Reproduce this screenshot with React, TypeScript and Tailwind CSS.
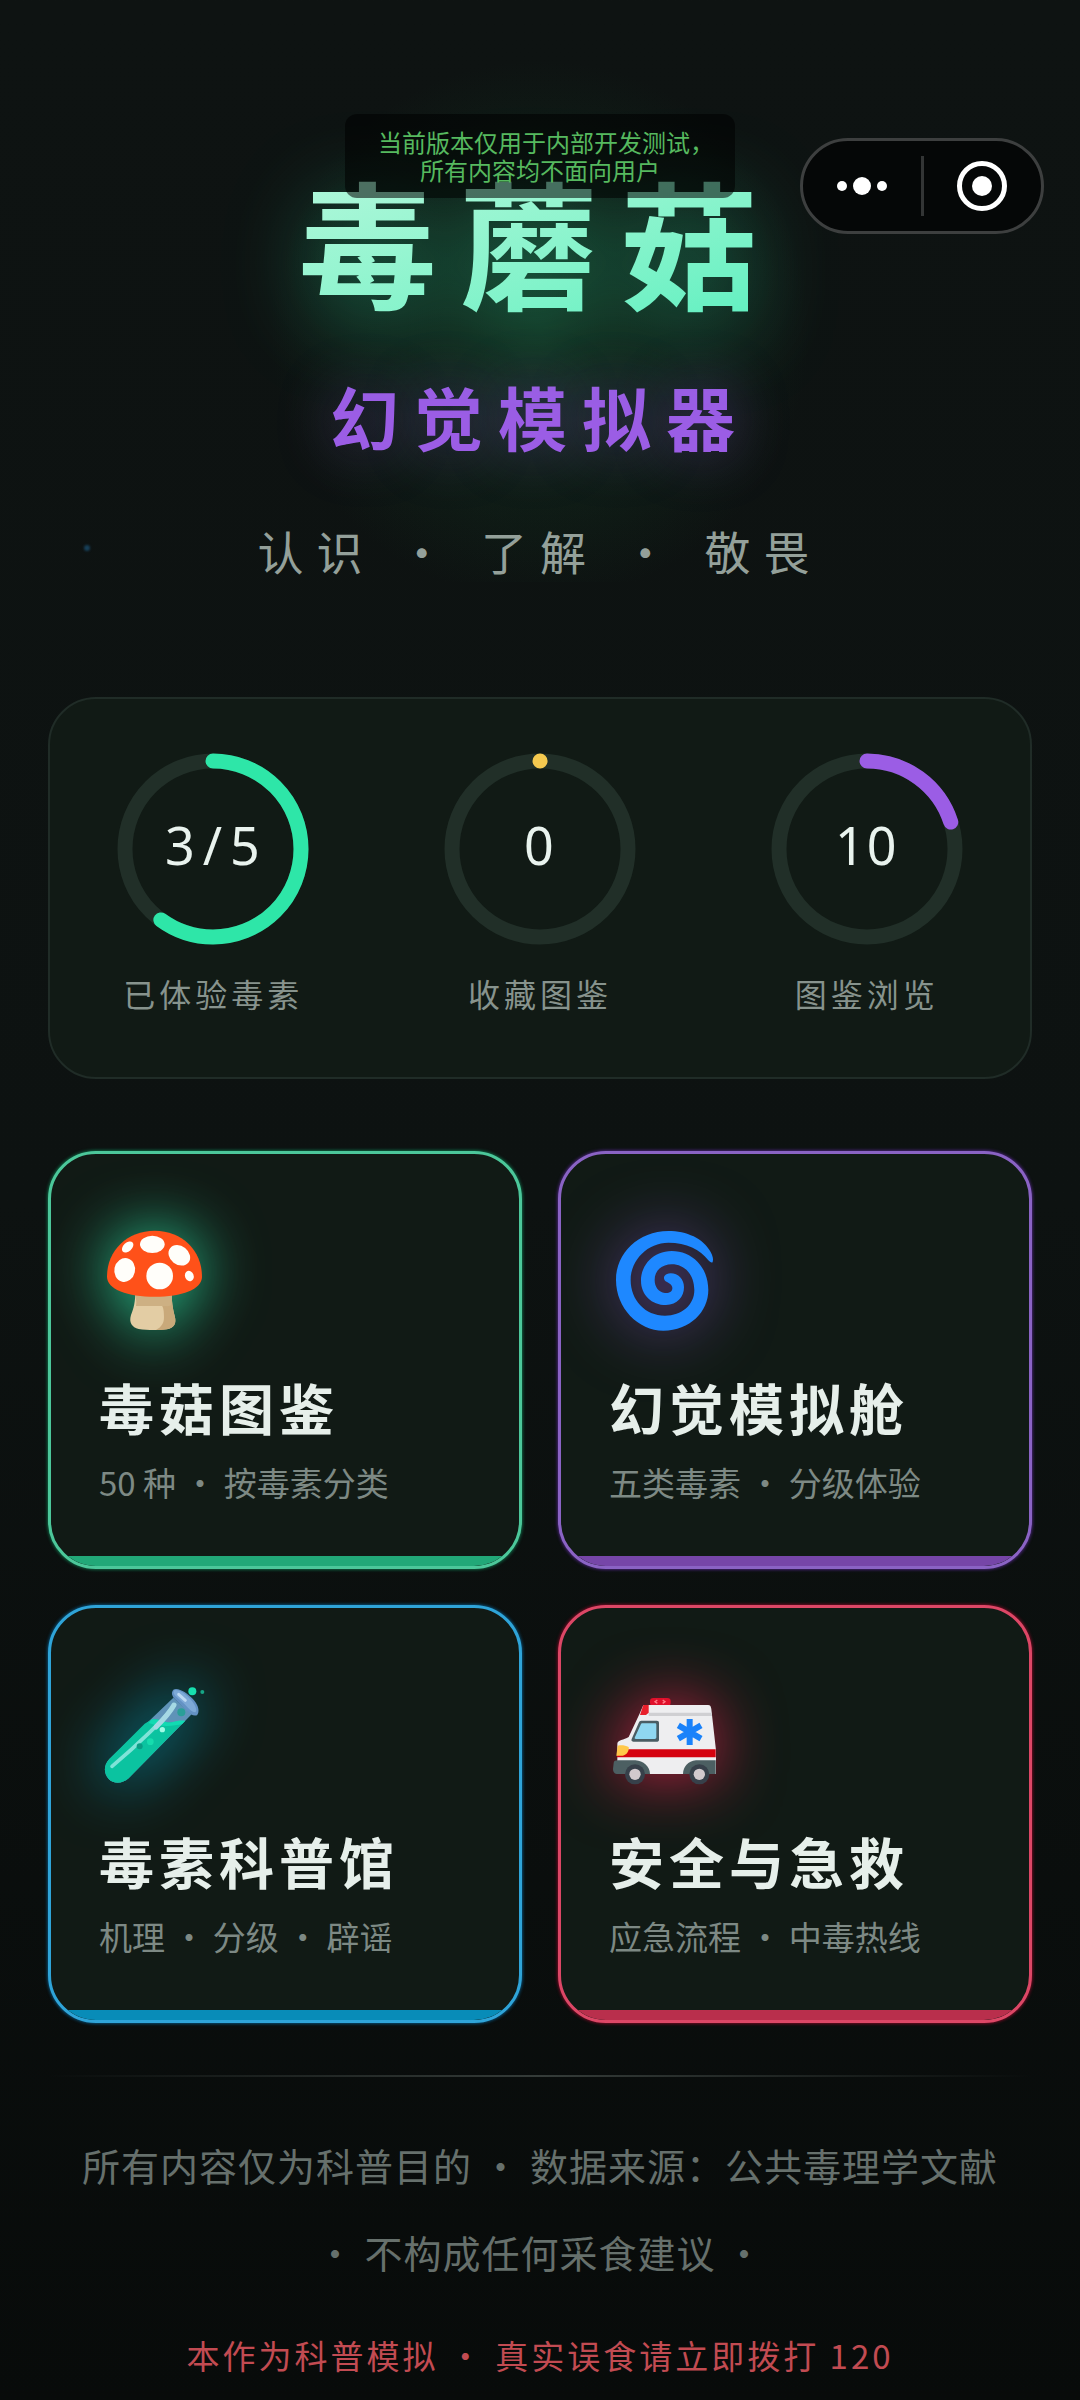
import React from 'react';

interface Stat {
    label: string;
    value: string;
    total?: string;
    percent: number;
    color: string;
}

interface Entry {
    title: string;
    desc: string;
    href: string;
    icon: React.ReactNode;
    cardClass: string;
    barClass: string;
    iconClass: string;
}

const MushroomIcon = () => (
    <svg viewBox="207 288 324 324" className="h-full w-full overflow-visible" aria-hidden="true">
        <path d="M316 485 C316 515 311 535 303 555 C296 578 306 592 326 597 C350 601 388 601 410 598 C432 594 440 580 434 558 C428 535 425 515 425 485Z" fill="#e3cda4" />
        <path d="M388 520 C401 526 402 545 402 562 C402 580 394 592 378 600 C400 600 416 598 424 593 C438 586 438 572 434 558 C428 535 425 515 425 490Z" fill="#c9a97a" />
        <path d="M316 485 H425 V520 C425 532 410 528 390 528 H318 C321 515 316 500 316 485Z" fill="#cdb083" />
        <path d="M374 302 C455 302 516 360 516 440 C516 478 455 500 374 500 C293 500 231 478 231 440 C231 360 293 302 374 302Z" fill="#ff5119" />
        <ellipse cx="367" cy="343" rx="37" ry="26" fill="#fffefa" />
        <ellipse cx="448" cy="376" rx="35" ry="28" transform="rotate(38 448 376)" fill="#fffefa" />
        <ellipse cx="293" cy="351" rx="20" ry="13" transform="rotate(-42 293 351)" fill="#fffefa" />
        <ellipse cx="284" cy="420" rx="31" ry="36" transform="rotate(12 284 420)" fill="#fffefa" />
        <circle cx="389" cy="438" r="40" fill="#fffefa" />
        <ellipse cx="478" cy="438" rx="13" ry="16" transform="rotate(-20 478 438)" fill="#fffefa" />
    </svg>
);

const SpiralIcon = () => (
    <svg viewBox="207 288 324 324" className="h-full w-full overflow-visible" aria-hidden="true">
        <path
            d="M518 396 C521 388 518 378 512 366 C490 325 440 303 385 303 C295 303 228 370 228 450 C228 535 295 602 370 602 C450 602 505 545 505 480 C505 410 455 363 395 363 C340 363 303 405 303 452 C303 495 335 525 378 525 C412 525 432 500 432 472 C432 448 415 430 392 430 C375 430 367 442 375 452 C382 457 396 462 397 473 C398 484 388 490 375 489 C355 487 344 470 344 450 C344 422 366 403 395 403 C435 403 463 435 463 480 C463 525 425 557 375 557 C315 557 272 510 272 450 C272 388 325 338 385 338 C440 338 480 358 505 391 C509 396 516 400 518 396Z"
            fill="#1e88ff"
        />
    </svg>
);

const TestTubeIcon = () => (
    <svg viewBox="9 9 324 324" className="h-full w-full overflow-visible" aria-hidden="true">
        <path d="M232 62 L287 112 L98 304 C78 322 52 321 38 306 C22 289 23 264 40 246Z" fill="#5f93b8" />
        <path d="M166 128 C190 122 205 140 228 136 C244 132 254 132 266 133 L98 304 C78 322 52 321 38 306 C22 289 23 264 40 246 L146 140Z" fill="#0bc3a0" />
        <path d="M166 128 C190 122 205 140 228 136 C244 130 256 130 268 131 L258 142 C235 146 200 152 158 138Z" fill="#12dab2" />
        <path d="M232 38 C246 30 275 48 294 70 C309 88 311 106 303 115 C290 118 285 112 276 104 L236 66 C226 54 226 46 232 38Z" fill="#6492c4" />
        <path d="M236 39 C252 38 272 52 288 72 C300 88 304 100 298 106 C286 106 278 94 266 82 L242 60 C232 52 230 44 236 39Z" fill="#7da9d6" />
        <path d="M248 52 L268 70" stroke="#bcd9f2" strokeWidth="9" strokeLinecap="round" />
        <path d="M234 84 C215 118 120 208 48 268" fill="none" stroke="#7fe3d8" strokeWidth="11" strokeLinecap="round" />
        <path d="M234 84 C224 102 204 126 180 150" fill="none" stroke="#a5d9e4" strokeWidth="15" strokeLinecap="round" />
        <circle cx="256" cy="106" r="12" fill="#2a9f98" />
        <circle cx="199" cy="158" r="8" fill="#a0fbe6" />
        <circle cx="163" cy="194" r="10" fill="#16dcae" />
        <circle cx="131" cy="208" r="9" fill="#0a9c84" />
        <circle cx="289" cy="43" r="12" fill="#17dfae" />
        <circle cx="319" cy="45" r="6" fill="#16a586" />
    </svg>
);

const AmbulanceIcon = () => (
    <svg viewBox="15 9 324 324" className="h-full w-full overflow-visible" aria-hidden="true">
        <rect x="138" y="63" width="62" height="24" rx="10" fill="#e0102b" />
        <path d="M160 69 L153 74 L160 79 M176 69 L183 74 L176 79" fill="none" stroke="#ff7a86" strokeWidth="4" />
        <path d="M118 84 H312 C319 84 321 89 322 96 L336 220 V291 H40 V200 C40 190 60 188 74 180 L106 112Z" fill="#eeeef0" />
        <path d="M134 107 H323 L324 117 H134Z" fill="#cfcfd2" />
        <path d="M118 84 H134 V107 L126 114 H108Z" fill="#e81f2b" />
        <path d="M112 131 H158 C163 131 165 133 165 138 V188 C165 192 162 194 158 194 H88 C82 194 81 190 84 184 L104 138 C106 133 108 131 112 131Z" fill="#4a5d63" />
        <path d="M116 139 H153 C156 139 157 141 157 143 V181 C157 184 155 186 152 186 H96 C92 186 91 184 93 180 L110 143 C111 140 113 139 116 139Z" fill="#8fd7f0" />
        <path d="M66 217 H335 V241 H38 L40 234Z" fill="#d5020f" />
        <path d="M41 206 C52 204 64 205 74 210 C76 222 68 234 56 236 H37Z" fill="#ffc84a" />
        <path d="M29 258 C29 252 34 250 42 250 H94 C118 252 138 268 138 291 H38 C30 290 27 284 27 276Z" fill="#4c5f62" />
        <path d="M335 250 V291 H237 C237 270 252 252 276 250Z" fill="#4c5f62" />
        <circle cx="93" cy="292" r="30" fill="#37404a" />
        <circle cx="286" cy="292" r="30" fill="#37404a" />
        <circle cx="93" cy="292" r="17" fill="#d2c9cd" />
        <circle cx="286" cy="292" r="17" fill="#d2c9cd" />
        <path d="M257 126 V204 M223 145 L291 185 M291 145 L223 185" stroke="#1a82fa" strokeWidth="18" />
    </svg>
);

const stats: Stat[] = [
    { label: '已体验毒素', value: '3', total: '5', percent: 60, color: '#2ee6a8' },
    { label: '收藏图鉴', value: '0', percent: 0, color: '#f5c94f' },
    { label: '图鉴浏览', value: '10', percent: 20, color: '#9b5de5' },
];

const entries: Entry[] = [
    {
        title: '毒菇图鉴',
        desc: '50 种 · 按毒素分类',
        href: '#atlas',
        icon: <MushroomIcon />,
        cardClass: 'border-[#4cc79a] shadow-[0_0_3px_1px_rgba(16,120,80,0.8)]',
        barClass: 'bg-[#22a878]',
        iconClass: 'drop-shadow-[0_0_32px_rgba(46,230,168,0.9)]',
    },
    {
        title: '幻觉模拟舱',
        desc: '五类毒素 · 分级体验',
        href: '#simulator',
        icon: <SpiralIcon />,
        cardClass: 'border-[#8a63c4] shadow-[0_0_3px_1px_rgba(84,40,140,0.8)]',
        barClass: 'bg-[#7646a8]',
        iconClass: 'drop-shadow-[0_0_32px_rgba(155,93,229,0.6)]',
    },
    {
        title: '毒素科普馆',
        desc: '机理 · 分级 · 辟谣',
        href: '#science',
        icon: <TestTubeIcon />,
        cardClass: 'border-[#2fa4d8] shadow-[0_0_3px_1px_rgba(8,92,140,0.8)]',
        barClass: 'bg-[#088cb8]',
        iconClass: 'drop-shadow-[0_0_32px_rgba(0,180,216,0.9)]',
    },
    {
        title: '安全与急救',
        desc: '应急流程 · 中毒热线',
        href: '#first-aid',
        icon: <AmbulanceIcon />,
        cardClass: 'border-[#dc4766] shadow-[0_0_3px_1px_rgba(140,10,40,0.8)]',
        barClass: 'bg-[#b92f4c]',
        iconClass: 'drop-shadow-[0_0_32px_rgba(239,35,80,0.8)]',
    },
];

const RADIUS = 88;
const CIRCUMFERENCE = 2 * Math.PI * RADIUS;

const StatRing = ({ stat }: { stat: Stat }) => (
    <div className="flex flex-col items-center">
        <div className="grid h-48 w-48 place-items-center">
            <svg viewBox="0 0 192 192" className="col-start-1 row-start-1 h-48 w-48 -rotate-90" aria-hidden="true">
                <circle cx="96" cy="96" r={RADIUS} fill="none" stroke="#212f28" strokeWidth="15" />
                <circle
                    cx="96"
                    cy="96"
                    r={RADIUS}
                    fill="none"
                    stroke={stat.color}
                    strokeWidth="15"
                    strokeLinecap="round"
                    strokeDasharray={`${Math.max(0.1, (CIRCUMFERENCE * stat.percent) / 100)} ${CIRCUMFERENCE}`}
                />
            </svg>
            <div className="col-start-1 row-start-1 pb-2 font-['Noto_Sans',sans-serif] text-[52px] leading-none tracking-[2px] text-[#e9f3ee]">
                {stat.value}
                {stat.total && <><span className="mx-[6px]">/</span>{stat.total}</>}
            </div>
        </div>
        <p className="mt-6 text-[32px] leading-12 tracking-[4px] text-[#87938d]">{stat.label}</p>
    </div>
);

const EntryCard = ({ entry }: { entry: Entry }) => (
    <a href={entry.href} className={`flex flex-col overflow-hidden rounded-[48px] border-3 bg-[#111a15] ${entry.cardClass}`}>
        <div className="flex-1 px-12 pt-18 pb-[50px]">
            <div className={`h-27 w-27 ${entry.iconClass}`}>{entry.icon}</div>
            <h2 className="mt-8 text-[55px] leading-20 font-bold tracking-[5px] whitespace-nowrap text-[#e6efea]">{entry.title}</h2>
            <p className="mt-3 text-[33px] leading-12 whitespace-nowrap text-[#7d8984]">{entry.desc}</p>
        </div>
        <div className={`h-[10px] ${entry.barClass}`} />
    </a>
);

const App = () => {
    return (
        <div className="relative min-h-screen overflow-hidden bg-linear-to-b from-[#0e1312] via-[#0d1211] to-[#080b0a] font-['Noto_Sans_CJK_SC','Noto_Sans',sans-serif]" lang="zh-CN">
            {/* Mini program capsule */}
            <div className="absolute top-[138px] right-9 z-20 flex h-24 w-61 items-center rounded-full border-3 border-[#3d3f3f] bg-[#050707]">
                <button type="button" aria-label="更多" className="flex flex-1 items-center justify-center gap-[6px]">
                    <span className="h-[10px] w-[10px] rounded-full bg-white" />
                    <span className="h-[18px] w-[18px] rounded-full bg-white" />
                    <span className="h-[10px] w-[10px] rounded-full bg-white" />
                </button>
                <span className="h-15 w-[3px] bg-[#333535]" />
                <button type="button" aria-label="关闭" className="flex flex-1 items-center justify-center">
                    <span className="flex h-[50px] w-[50px] items-center justify-center rounded-full border-5 border-white">
                        <span className="h-5 w-5 rounded-full bg-white" />
                    </span>
                </button>
            </div>

            {/* Internal build notice */}
            <div className="absolute top-[114px] left-1/2 z-10 w-[390px] -translate-x-1/2 rounded-xl bg-black/55 px-4 py-[14px] text-center text-[24px] leading-7 text-[#56b95f]">
                <p className="whitespace-nowrap [font-feature-settings:'halt']">当前版本仅用于内部开发测试，</p>
                <p>所有内容均不面向用户</p>
            </div>

            {/* Floating spore */}
            <span className="absolute top-[545px] left-[84px] h-[6px] w-[6px] rounded-full bg-[#17405a] blur-[1px]" />

            <header className="flex flex-col items-center bg-[radial-gradient(circle_at_50%_330px,rgba(24,84,48,0.4),rgba(24,84,48,0)_270px)] pt-39 text-center">
                <h1 className="drop-shadow-[0_16px_44px_rgba(46,230,168,0.4)]">
                    <span className="block bg-linear-to-br from-[#b4f8dc] to-[#5cf0c0] bg-clip-text text-[138px] leading-[166px] font-bold tracking-[23px] whitespace-nowrap text-transparent">毒蘑菇</span>
                </h1>
                <p className="mt-13 text-[69px] leading-21 font-bold tracking-[15px] whitespace-nowrap text-[#9b5de5] [text-shadow:0_0_58px_rgba(155,93,229,0.4)]">幻觉模拟器</p>
                <p className="mt-15 text-[46px] leading-16 tracking-[13px] whitespace-nowrap text-[#94a09a]">认识 · 了解 · 敬畏</p>
            </header>

            <main className="px-12 pt-[115px]">
                <section className="grid grid-cols-3 rounded-[48px] border-2 border-[#202c27] bg-[#111a15] pt-[54px] pb-15">
                    {stats.map(stat => (
                        <StatRing key={stat.label} stat={stat} />
                    ))}
                </section>

                <nav className="mt-18 grid grid-cols-2 gap-9">
                    {entries.map(entry => (
                        <EntryCard key={entry.title} entry={entry} />
                    ))}
                </nav>
            </main>

            <footer className="px-12 pt-13 pb-5 text-center">
                <div className="h-[2px] bg-linear-to-r from-transparent via-[#353c39] to-transparent" />
                <p className="mt-11 px-6 text-[38px] leading-[87px] tracking-[1px] text-[#66706c]">
                    所有内容仅为科普目的 · 数据来源：公共毒理学文献 · 不构成任何采食建议 ·
                </p>
                <p className="mt-9 text-[33px] leading-12 tracking-[3px] text-[#c24b52]">本作为科普模拟 · 真实误食请立即拨打 120</p>
            </footer>
        </div>
    );
};

export default App;
